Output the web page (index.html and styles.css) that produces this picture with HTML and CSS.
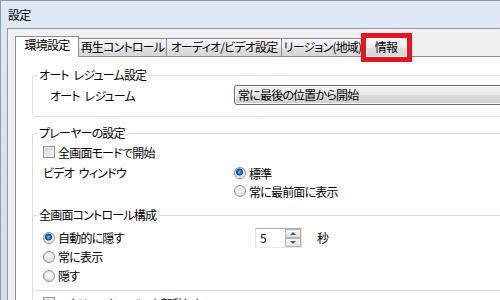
FILE: index.html
```html
<!DOCTYPE html>
<html lang="ja">
<head>
    <meta charset="UTF-8">
    <meta name="viewport" content="width=device-width, initial-scale=1.0">
    <title>設定</title>
    <link rel="stylesheet" href="styles.css">
</head>
<body>
    <div class="window">
        <!-- Title bar -->
        <div class="title-bar">設定</div>

        <div class="client">
            <!-- Tabs -->
            <div class="tab-strip">
                <div class="tab active tab-general">環境設定</div>
                <div class="tab tab-playback">再生コントロール</div>
                <div class="tab tab-av">オーディオ/ビデオ設定</div>
                <div class="tab tab-region">リージョン(地域)</div>
                <div class="tab tab-info marked">情報</div>
            </div>

            <!-- Tab page -->
            <div class="tab-panel">
                <fieldset class="group">
                    <legend>オート レジューム設定</legend>
                    <div class="group-body resume-body">
                        <div class="row">
                            <span class="row-label">オート レジューム</span>
                            <div class="combo">常に最後の位置から開始</div>
                        </div>
                    </div>
                </fieldset>

                <fieldset class="group group-player">
                    <legend>プレーヤーの設定</legend>
                    <div class="group-body player-body">
                        <div class="check"><span class="box"></span>全画面モードで開始</div>
                        <div class="row video-row">
                            <span class="row-label">ビデオ ウィンドウ</span>
                            <div class="radio-list">
                                <div class="radio checked"><span class="dot"></span>標準</div>
                                <div class="radio"><span class="dot"></span>常に最前面に表示</div>
                            </div>
                        </div>
                    </div>

                    <fieldset class="group group-controls">
                        <legend>全画面コントロール構成</legend>
                        <div class="group-body controls-body">
                            <div class="radio-list">
                                <div class="radio checked"><span class="dot"></span>自動的に隠す</div>
                                <div class="radio"><span class="dot"></span>常に表示</div>
                                <div class="radio"><span class="dot"></span>隠す</div>
                            </div>
                            <div class="spin">
                                <div class="spin-value">5</div>
                                <div class="spin-buttons">
                                    <span class="spin-up"></span>
                                    <span class="spin-down"></span>
                                </div>
                            </div>
                            <span class="unit">秒</span>
                        </div>
                    </fieldset>

                    <div class="group-body bottom-body">
                        <div class="check"><span class="box"></span>スクリーンセーバーを起動しない</div>
                    </div>
                </fieldset>
            </div>
        </div>
    </div>
</body>
</html>
```

FILE: styles.css
```css
body {
    margin: 0;
    background: #d7e2ee;
    font-family: "Noto Sans CJK JP", sans-serif;
    font-size: 12px;
    font-feature-settings: "palt";
    letter-spacing: -0.8px;
    word-spacing: 3px;
    color: #000;
    overflow: hidden;
}

/* Window frame */
.window {
    width: 640px;
    height: 300px;
    border-top: 1px solid #8e9cab;
    border-left: 1px solid #8e9cab;
    background: linear-gradient(#dfe8f3, #d3deeb);
}

.title-bar {
    height: 27px;
    line-height: 27px;
    padding-left: 7px;
}

.client {
    margin-left: 6px;
    height: 400px;
    border-top: 1px solid #8f9aa6;
    border-left: 1px solid #8f9aa6;
    background: #f0f0f0;
}

/* Tabs */
.tab-strip {
    display: flex;
    align-items: flex-end;
    height: 20px;
    padding: 7px 0 0 7px;
}

.tab {
    box-sizing: border-box;
    height: 18px;
    line-height: 16px;
    margin-left: -1px;
    border: 1px solid #898c95;
    border-bottom: none;
    background: linear-gradient(#f6f6f6, #ececec 50%, #e0e0e0 51%, #d6d6d6);
    text-align: center;
    white-space: nowrap;
}

.tab.active {
    position: relative;
    z-index: 1;
    height: 21px;
    margin-left: 0;
    margin-bottom: -1px;
    padding-bottom: 3px;
    background: #fff;
}

.tab-general { width: 64px; }
.tab-playback { width: 89px; }
.tab-av { width: 116px; }
.tab-region { width: 83px; }
.tab-info { width: 46px; }

.tab.marked {
    position: relative;
}

/* red highlight drawn over the tab */
.tab.marked::after {
    content: '';
    position: absolute;
    top: -6px;
    bottom: -6px;
    left: -3px;
    right: -4px;
    border: 5px solid #e8141e;
    box-shadow: inset 0 0 0 1px #fff;
}

.tab-panel {
    height: 400px;
    margin-left: 7px;
    padding: 11px 0 0 16px;
    border: 1px solid #898c95;
    background: #fff;
}

/* Group boxes */
.group {
    margin: 0;
    padding: 0;
    min-width: 0;
    border: 1px solid #d5dfe5;
    border-radius: 3px;
}

.group legend {
    margin-left: 4px;
    padding: 0 2px;
    line-height: 14px;
}

.resume-body {
    padding: 3px 0 11px 17px;
}

.row {
    display: flex;
    align-items: center;
}

.row-label {
    width: 184px;
}

.combo {
    box-sizing: border-box;
    width: 320px;
    height: 20px;
    line-height: 18px;
    padding-left: 3px;
    border: 1px solid #707070;
    border-radius: 3px;
    background: linear-gradient(#f2f2f2, #ebebeb 50%, #dddddd 50%, #cfcfcf);
    box-shadow: inset 0 0 0 1px #fcfcfc;
}

.group-player {
    margin-top: 9px;
    padding-bottom: 20px;
}

.player-body {
    padding: 3px 0 0 10px;
}

.bottom-body {
    padding: 3px 0 0 10px;
}

.check,
.radio {
    display: flex;
    align-items: center;
    gap: 3px;
    height: 18px;
}

.box {
    box-sizing: border-box;
    width: 12px;
    height: 12px;
    border: 1px solid #8f8f8f;
    background: linear-gradient(135deg, #cfcfcf, #f7f7f7);
    box-shadow: inset 0 0 0 1px #f2f2f2;
}

.video-row {
    align-items: flex-start;
    margin-top: 3px;
}

.video-row .row-label {
    width: 191px;
    line-height: 18px;
}

.dot {
    box-sizing: border-box;
    width: 12px;
    height: 12px;
    border: 1px solid #8f8f8f;
    border-radius: 50%;
    background: radial-gradient(circle at 50% 40%, #fbfbfb, #d6d6d6);
}

.radio.checked .dot {
    background: radial-gradient(circle at 45% 40%, #9ad6ff 0, #2a7ed3 1.5px, #0c4a95 3.2px, #dcdcdc 3.8px, #f4f4f4 6px);
}

/* Full screen controls */
.group-controls {
    margin: 8px 0 0 -1px;
}

.group-controls .radio {
    height: 19px;
}

.controls-body {
    display: flex;
    align-items: flex-start;
    padding: 6px 0 5px 10px;
}

.controls-body .radio-list {
    width: 212px;
}

.spin {
    box-sizing: border-box;
    display: flex;
    width: 47px;
    height: 20px;
    border: 1px solid;
    border-color: #abadb3 #dbdfe6 #e3e9ef #e2e3ea;
}

.spin-value {
    flex: 1;
    padding-left: 4px;
    line-height: 18px;
}

.spin-buttons {
    display: flex;
    flex-direction: column;
    width: 16px;
}

.spin-up,
.spin-down {
    box-sizing: border-box;
    flex: 1;
    display: flex;
    align-items: center;
    justify-content: center;
    border: 1px solid #b4b4b4;
    background: linear-gradient(#f5f5f5, #e2e2e2);
}

.spin-up::before,
.spin-down::before {
    content: '';
    border-left: 3px solid transparent;
    border-right: 3px solid transparent;
}

.spin-up::before {
    border-bottom: 3px solid #3d5a8a;
}

.spin-down::before {
    border-top: 3px solid #3d5a8a;
}

.unit {
    margin-left: 15px;
    line-height: 20px;
}
```
